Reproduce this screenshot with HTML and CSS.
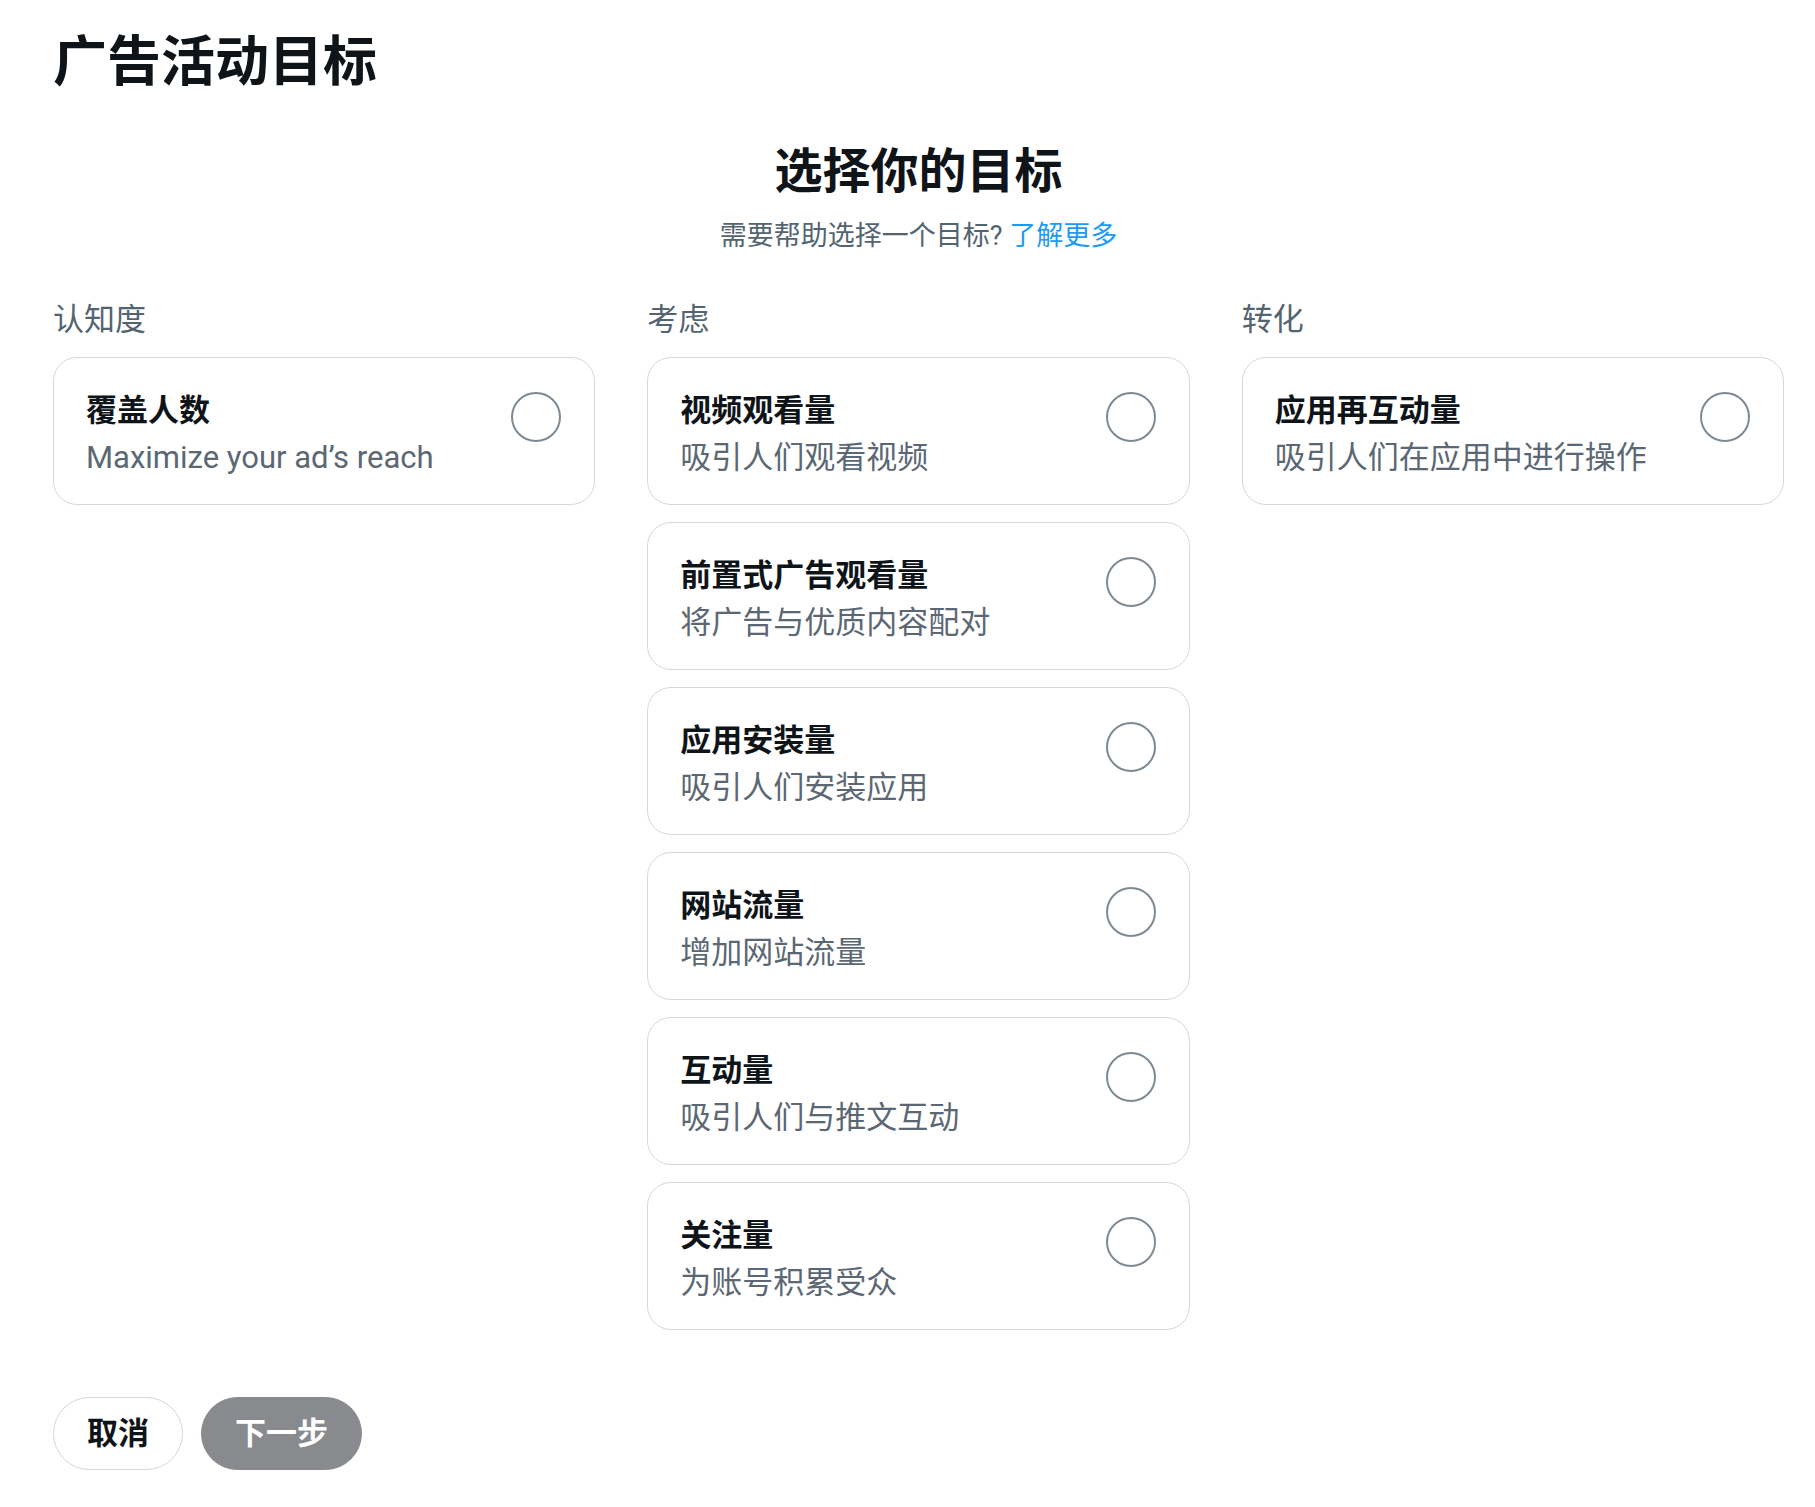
FILE: index.html
```html
<!DOCTYPE html>
<html lang="zh-CN">
<head>
<meta charset="utf-8">
<title>广告活动目标</title>
<link rel="stylesheet" href="styles.css">
</head>
<body>
<div class="page">
  <h1 class="page-title">广告活动目标</h1>
  <div class="intro">
    <h2 class="intro-title">选择你的目标</h2>
    <p class="intro-sub">需要帮助选择一个目标? <a class="link" href="#">了解更多</a></p>
  </div>
  <div class="columns">
    <section class="col">
      <div class="col-label">认知度</div>
      <div class="card">
        <div class="card-text">
          <div class="card-title">覆盖人数</div>
          <div class="card-desc">Maximize your ad’s reach</div>
        </div>
        <span class="radio"></span>
      </div>
    </section>
    <section class="col">
      <div class="col-label">考虑</div>
      <div class="card">
        <div class="card-text">
          <div class="card-title">视频观看量</div>
          <div class="card-desc">吸引人们观看视频</div>
        </div>
        <span class="radio"></span>
      </div>
      <div class="card">
        <div class="card-text">
          <div class="card-title">前置式广告观看量</div>
          <div class="card-desc">将广告与优质内容配对</div>
        </div>
        <span class="radio"></span>
      </div>
      <div class="card">
        <div class="card-text">
          <div class="card-title">应用安装量</div>
          <div class="card-desc">吸引人们安装应用</div>
        </div>
        <span class="radio"></span>
      </div>
      <div class="card">
        <div class="card-text">
          <div class="card-title">网站流量</div>
          <div class="card-desc">增加网站流量</div>
        </div>
        <span class="radio"></span>
      </div>
      <div class="card">
        <div class="card-text">
          <div class="card-title">互动量</div>
          <div class="card-desc">吸引人们与推文互动</div>
        </div>
        <span class="radio"></span>
      </div>
      <div class="card">
        <div class="card-text">
          <div class="card-title">关注量</div>
          <div class="card-desc">为账号积累受众</div>
        </div>
        <span class="radio"></span>
      </div>
    </section>
    <section class="col">
      <div class="col-label">转化</div>
      <div class="card">
        <div class="card-text">
          <div class="card-title">应用再互动量</div>
          <div class="card-desc">吸引人们在应用中进行操作</div>
        </div>
        <span class="radio"></span>
      </div>
    </section>
  </div>
  <div class="actions">
    <button class="btn btn-outline">取消</button>
    <button class="btn btn-disabled">下一步</button>
  </div>
</div>
</body>
</html>
```

FILE: styles.css
```css
html, body {
  margin: 0;
  padding: 0;
  background: #ffffff;
}

body {
  font-family: Roboto, "Noto Sans CJK SC", "Noto Sans", sans-serif;
  color: #0f1419;
}

.page {
  padding: 31px 31px 0 53px;
}

.page-title {
  margin: 0;
  font-size: 54px;
  line-height: 64px;
  font-weight: 700;
  letter-spacing: 0;
}

.intro {
  margin-top: 48px;
  text-align: center;
}

.intro-title {
  margin: 0;
  font-size: 48px;
  line-height: 58px;
  font-weight: 700;
}

.intro-sub {
  margin: 17px 0 0;
  font-size: 27px;
  line-height: 36px;
  color: #536471;
}

.link {
  color: #1d9bf0;
  text-decoration: none;
}

.columns {
  margin-top: 46px;
  display: grid;
  grid-template-columns: repeat(3, 1fr);
  column-gap: 52px;
  align-items: start;
}

.col {
  display: flex;
  flex-direction: column;
  gap: 17px;
}

.col-label {
  font-size: 31px;
  line-height: 40px;
  color: #536471;
}

.card {
  display: flex;
  align-items: flex-start;
  justify-content: space-between;
  border: 1px solid #d3dade;
  border-radius: 24px;
  padding: 32px 33px 26px 32px;
  font-size: 31px;
  line-height: 41px;
}

.card-title {
  font-weight: 700;
  color: #0f1419;
}

.card-desc {
  margin-top: 6px;
  color: #5b6873;
}

.radio {
  flex: none;
  width: 46px;
  height: 46px;
  margin-top: 2px;
  border: 2px solid #7d8a94;
  border-radius: 50%;
}

.actions {
  margin-top: 67px;
  display: flex;
  gap: 18px;
}

.btn {
  font-family: Roboto, "Noto Sans CJK SC", "Noto Sans", sans-serif;
  font-size: 31px;
  line-height: 71px;
  font-weight: 700;
  padding: 0 33px;
  border-radius: 9999px;
  border: 1px solid transparent;
  cursor: pointer;
}

.btn-outline {
  background: #ffffff;
  border-color: #cfd9de;
  color: #0f1419;
}

.btn-disabled {
  background: #888a8d;
  border-color: #888a8d;
  color: #ffffff;
}
```
